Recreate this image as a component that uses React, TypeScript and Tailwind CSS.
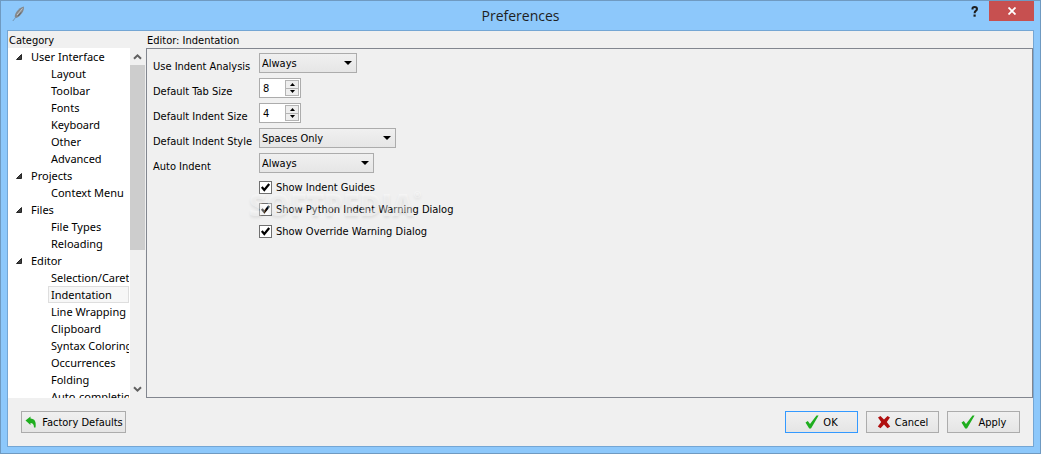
import React from 'react';
import { clsx } from 'clsx';

interface Category {
  name: string;
  items: string[];
}

const categories: Category[] = [
  { name: 'User Interface', items: ['Layout', 'Toolbar', 'Fonts', 'Keyboard', 'Other', 'Advanced'] },
  { name: 'Projects', items: ['Context Menu'] },
  { name: 'Files', items: ['File Types', 'Reloading'] },
  {
    name: 'Editor',
    items: [
      'Selection/Caret',
      'Indentation',
      'Line Wrapping',
      'Clipboard',
      'Syntax Coloring',
      'Occurrences',
      'Folding',
      'Auto-completion',
    ],
  },
];

function CheckIcon() {
  return (
    <svg width="14" height="14" viewBox="0 0 14 14" aria-hidden="true">
      <path d="M0.5 7.5 L2.8 6 L5 9 L11.5 0.5 H13.6 L6 13.6 H4.2 Z" fill="#1fae1f" />
    </svg>
  );
}

function CrossIcon() {
  return (
    <svg width="14" height="14" viewBox="0 0 14 14" aria-hidden="true">
      <path
        d="M1 2.5 L3.5 1 L7 4.5 L10.5 1 L13 2.5 L9.8 7 L13.2 11.5 L10.5 13.2 L7 9.6 L3.5 13.2 L0.8 11.5 L4.2 7 Z"
        fill="#b01010"
      />
    </svg>
  );
}

function UndoIcon() {
  return (
    <svg width="12" height="12" viewBox="0 0 12 12" aria-hidden="true">
      <path d="M0.5 4.5 L5.5 0.5 V2.6 C9.5 2.8 11.5 5.5 10.5 11.5 H9 C9 8.6 7.8 7 5.5 7 V9 Z" fill="#1fae1f" />
    </svg>
  );
}

function FeatherIcon() {
  return (
    <svg width="14" height="16" viewBox="0 0 14 16" aria-hidden="true">
      <path d="M2.8 11.5 C2.2 8 6 2 11.8 0.6 C12.8 4.5 8.8 10.4 4.5 12 Z" fill="#85898d" />
      <path d="M5 9 L10.5 2.5" stroke="#c5c9cc" fill="none" />
      <path d="M6 10.3 L9 6.5" stroke="#5f6367" fill="none" />
      <path d="M4 11 L0.8 15" stroke="#7595b0" fill="none" />
    </svg>
  );
}

function TitleBar() {
  return (
    <header className="relative flex h-[29px] shrink-0 items-start justify-between pl-[11px] text-[#1e1e1e]">
      <div className="pt-[5px]">
        <FeatherIcon />
      </div>
      <h1 className="absolute inset-x-0 top-1 text-center font-['Open_Sans',sans-serif] text-[14px] leading-[21px]">
        Preferences
      </h1>
      <div className="relative flex pr-[6px]">
        <button aria-label="Help" className="flex h-5 w-7 items-center justify-center">
          <svg width="8" height="11" viewBox="0 0 8 11" aria-hidden="true">
            <path d="M1.5 3.5 V2.5 Q1.5 1 3.5 1 Q6 1 6 3 Q6 4 4.8 4.8 Q3.6 5.6 3.6 7.2" fill="none" stroke="#1e1e1e" strokeWidth="2" />
            <rect x="2.5" y="8.5" width="2.2" height="2.2" fill="#1e1e1e" />
          </svg>
        </button>
        <button aria-label="Close" className="flex h-5 w-[45px] items-center justify-center bg-[#c75050]">
          <svg width="8" height="8" viewBox="0 0 8 8" aria-hidden="true">
            <path d="M0.5 0.5 L7.5 7.5 M7.5 0.5 L0.5 7.5" stroke="#fff" strokeWidth="1.8" />
          </svg>
        </button>
      </div>
    </header>
  );
}

function ScrollChevron({ down = false }: { down?: boolean }) {
  return (
    <svg width="15" height="17" viewBox="0 0 15 17" className={clsx('shrink-0', down && 'rotate-180')} aria-hidden="true">
      <path d="M4 10.8 L7.5 7.3 L11 10.8" fill="none" stroke="#606060" strokeWidth="2" />
    </svg>
  );
}

function CategoryTree() {
  return (
    <div className="flex min-h-0 flex-1 bg-white font-['Noto_Sans',sans-serif] text-[11px] leading-[17px]">
      <ul className="min-w-0 flex-1 overflow-hidden pr-px">
        {categories.map((category) => (
          <li key={category.name}>
            <div className="flex items-center pl-2">
              <svg width="6" height="6" viewBox="0 0 6 6" className="mr-[9px]" aria-hidden="true">
                <path d="M5.5 0.5 V5.5 H0.5 Z" fill="#404040" stroke="#262626" />
              </svg>
              {category.name}
            </div>
            <ul className="pl-10">
              {category.items.map((item) => (
                <li
                  key={item}
                  className={clsx(
                    'overflow-hidden pl-[3px] whitespace-nowrap',
                    item === 'Indentation' && 'bg-[#f7f7f7] outline -outline-offset-1 outline-[#dedede]'
                  )}
                >
                  {item}
                </li>
              ))}
            </ul>
          </li>
        ))}
      </ul>
      <div className="flex w-[15px] flex-col bg-[#f0f0f0]">
        <ScrollChevron />
        <div className="h-[185px] bg-[#cdcdcd]" />
        <div className="flex-1" />
        <ScrollChevron down />
      </div>
    </div>
  );
}

interface SelectFieldProps {
  id: string;
  value: string;
  options: string[];
  className: string;
}

function SelectField({ id, value, options, className }: SelectFieldProps) {
  return (
    <div className={clsx('relative h-5', className)}>
      <select
        id={id}
        defaultValue={value}
        className="h-full w-full appearance-none border border-[#acacac] bg-linear-to-b from-[#f0f0f0] to-[#e6e6e6] pt-[2px] pl-[2px]"
      >
        {options.map((option) => (
          <option key={option}>{option}</option>
        ))}
      </select>
      <svg width="8" height="4" viewBox="0 0 8 4" className="pointer-events-none absolute top-2 right-[5px]" aria-hidden="true">
        <path d="M0 0 H8 L4 4 Z" fill="#000" />
      </svg>
    </div>
  );
}

function SpinField({ id, value }: { id: string; value: number }) {
  return (
    <div className="flex h-5 w-[42px] border border-[#acacac] bg-white">
      <input id={id} type="text" defaultValue={value} className="w-6 min-w-0 flex-1 pt-[2px] pl-[3px]" />
      <div className="flex w-[15px] flex-col py-px pr-px">
        <button aria-label="Increase" className="flex flex-1 items-center justify-center border border-[#b4b4b4] bg-[#eeeeee]">
          <svg width="5" height="3" viewBox="0 0 5 3" aria-hidden="true">
            <path d="M0 3 L2.5 0 L5 3 Z" />
          </svg>
        </button>
        <button aria-label="Decrease" className="flex flex-1 items-center justify-center border border-t-0 border-[#b4b4b4] bg-[#eeeeee]">
          <svg width="5" height="3" viewBox="0 0 5 3" aria-hidden="true">
            <path d="M0 0 L2.5 3 L5 0 Z" />
          </svg>
        </button>
      </div>
    </div>
  );
}

function FormRow({ id, label, children }: { id: string; label: string; children: React.ReactNode }) {
  return (
    <div className="flex h-5">
      <label htmlFor={id} className="w-[106px] shrink-0 pt-[5px] leading-[18px] whitespace-nowrap">
        {label}
      </label>
      {children}
    </div>
  );
}

function CheckField({ label }: { label: string }) {
  return (
    <label className="flex h-[22px] items-center gap-1">
      <span className="relative flex">
        <input type="checkbox" defaultChecked className="peer h-[13px] w-[13px] appearance-none border border-[#707070] bg-white" />
        <svg
          width="13"
          height="13"
          viewBox="0 0 13 13"
          className="pointer-events-none invisible absolute inset-0 peer-checked:visible"
          aria-hidden="true"
        >
          <path d="M2.8 6 L5.3 9 L10.2 3" fill="none" stroke="#000" strokeWidth="2.2" />
        </svg>
      </span>
      <span className="pt-[2px]">{label}</span>
    </label>
  );
}

function IndentationPanel() {
  return (
    <div className="relative flex-1 border border-[#82868f] pt-1 pl-[6px]">
      <div className="flex flex-col gap-[5px]">
        <FormRow id="analysis" label="Use Indent Analysis">
          <SelectField id="analysis" value="Always" options={['Always', 'Never']} className="w-[98px]" />
        </FormRow>
        <FormRow id="tab-size" label="Default Tab Size">
          <SpinField id="tab-size" value={8} />
        </FormRow>
        <FormRow id="indent-size" label="Default Indent Size">
          <SpinField id="indent-size" value={4} />
        </FormRow>
        <FormRow id="indent-style" label="Default Indent Style">
          <SelectField id="indent-style" value="Spaces Only" options={['Spaces Only', 'Tabs Only']} className="w-[137px]" />
        </FormRow>
        <FormRow id="auto-indent" label="Auto Indent">
          <SelectField id="auto-indent" value="Always" options={['Always', 'Never']} className="w-[115px]" />
        </FormRow>
      </div>
      <div className="pt-[3px] pl-[106px]">
        <CheckField label="Show Indent Guides" />
        <CheckField label="Show Python Indent Warning Dialog" />
        <CheckField label="Show Override Warning Dialog" />
      </div>
      <div className="pointer-events-none absolute top-[138px] left-[102px] flex font-['Open_Sans',sans-serif] leading-9 font-extrabold text-white/40 [text-shadow:0_2px_3px_rgb(0_0_0/0.07)]">
        <span className="text-[30px]">SOFTPEDIA</span>
        <span className="text-[9px] leading-4">®</span>
      </div>
    </div>
  );
}

interface DialogButtonProps {
  icon: React.ReactNode;
  label: string;
  className: string;
}

function DialogButton({ icon, label, className }: DialogButtonProps) {
  return (
    <button
      className={clsx('flex h-[22px] items-center justify-center border bg-linear-to-b from-[#f0f0f0] to-[#e5e5e5]', className)}
    >
      {icon}
      <span className="pt-[2px]">{label}</span>
    </button>
  );
}

export default function App() {
  return (
    <div className="flex h-screen flex-col border border-[#6f9ac1] bg-[#8dc8fb] font-['DejaVu_Sans_Condensed','DejaVu_Sans',sans-serif] text-[11px] text-black">
      <TitleBar />
      <main className="mx-[6px] mb-[6px] flex min-h-0 flex-1 flex-col border border-[#74a6d4] bg-[#f0f0f0]">
        <div className="flex min-h-0 flex-1">
          <nav className="flex w-[137px] shrink-0 flex-col">
            <h2 className="h-[17px] pt-px pl-px leading-[18px]">Category</h2>
            <CategoryTree />
          </nav>
          <section className="ml-px flex min-w-0 flex-1 flex-col">
            <h2 className="h-[17px] pt-px pl-px leading-[18px]">Editor: Indentation</h2>
            <IndentationPanel />
          </section>
        </div>
        <footer className="flex shrink-0 items-center gap-2 p-[13px]">
          <DialogButton icon={<UndoIcon />} label="Factory Defaults" className="mr-auto w-[105px] gap-[5px] pl-px border-[#acacac]" />
          <DialogButton icon={<CheckIcon />} label="OK" className="w-[73px] gap-1 border-[#3399ff]" />
          <DialogButton icon={<CrossIcon />} label="Cancel" className="w-[73px] gap-1 border-[#acacac]" />
          <DialogButton icon={<CheckIcon />} label="Apply" className="w-[73px] gap-1 border-[#acacac]" />
        </footer>
      </main>
    </div>
  );
}
